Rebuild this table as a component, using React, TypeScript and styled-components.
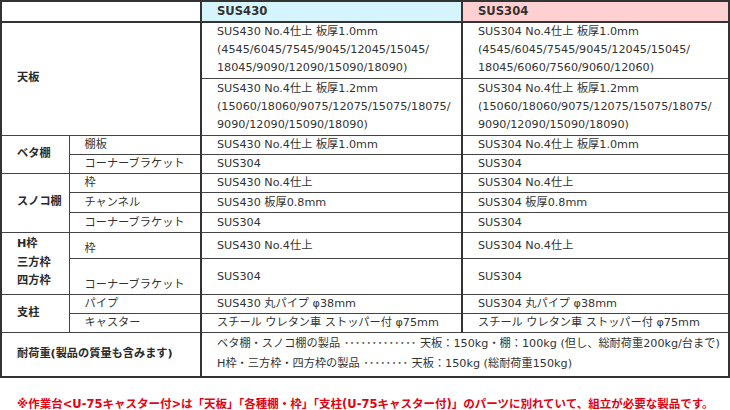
import React from "react";
import styled, { createGlobalStyle } from "styled-components";

const Global = createGlobalStyle`
  html, body { margin: 0; padding: 0; background: #fff; }
  body {
    font-family: "DejaVu Sans", "Noto Sans CJK JP", sans-serif;
    color: #333;
  }
`;

const Page = styled.div`
  width: 730px;
  height: 410px;
  overflow: hidden;
`;

const Table = styled.table`
  border-collapse: collapse;
  table-layout: fixed;
  width: 728px;
  font-size: 11.2px;
  border: 2px solid #333;
`;

const Row = styled.tr<{ $h: number }>`
  height: ${(p) => p.$h}px;
`;

const BaseCell = styled.td`
  border: 1px solid #444;
  padding: 0 4px 0 15px;
  line-height: 15px;
  white-space: nowrap;
  vertical-align: middle;
  overflow: hidden;
`;

const HeadCell = styled(BaseCell).attrs({ as: "th" })<{ $tone?: "blue" | "pink" }>`
  text-align: left;
  font-weight: bold;
  font-size: 11.6px;
  border-bottom: 2px solid #333;
  border-left-width: ${(p) => (p.$tone ? "2px" : "1px")};
  border-left-color: #333;
  background: ${(p) =>
    p.$tone === "blue" ? "#d6f4fb" : p.$tone === "pink" ? "#ffd0d2" : "#fff"};
`;

const LabelCell = styled(BaseCell)`
  font-weight: bold;
  color: #2a2a2a;
  line-height: 18.6px;
`;

const PartCell = styled(BaseCell)<{ $bottom?: boolean }>`
  vertical-align: ${(p) => (p.$bottom ? "bottom" : "middle")};
  padding-bottom: ${(p) => (p.$bottom ? "2px" : "0")};
`;

const SpecCell = styled(BaseCell)<{ $multi?: boolean }>`
  border-left: 2px solid #333;
  line-height: ${(p) => (p.$multi ? "18px" : "15px")};
`;

const LoadCell = styled(SpecCell)`
  line-height: 20px;
`;

const Dots = styled.span`
  color: #555;
`;

const Note = styled.p`
  margin: 19px 0 0 17px;
  font-size: 11.5px;
  font-weight: bold;
  color: #e60012;
  white-space: nowrap;
  line-height: 14px;
`;

const Lines: React.FC<{ lines: string[] }> = ({ lines }) => (
  <>
    {lines.map((l, i) => (
      <React.Fragment key={i}>
        {l}
        {i < lines.length - 1 && <br />}
      </React.Fragment>
    ))}
  </>
);

export default function App() {
  return (
    <Page>
      <Global />
      <Table>
        <colgroup>
          <col style={{ width: 68 }} />
          <col style={{ width: 132 }} />
          <col style={{ width: 261 }} />
          <col style={{ width: 267 }} />
        </colgroup>
        <thead>
          <Row $h={21}>
            <HeadCell colSpan={2} />
            <HeadCell $tone="blue">SUS430</HeadCell>
            <HeadCell $tone="pink">SUS304</HeadCell>
          </Row>
        </thead>
        <tbody>
          <Row $h={56}>
            <LabelCell rowSpan={2} colSpan={2}>天板</LabelCell>
            <SpecCell $multi>
              <Lines
                lines={[
                  "SUS430 No.4仕上 板厚1.0mm",
                  "(4545/6045/7545/9045/12045/15045/",
                  "18045/9090/12090/15090/18090)",
                ]}
              />
            </SpecCell>
            <SpecCell $multi>
              <Lines
                lines={[
                  "SUS304 No.4仕上 板厚1.0mm",
                  "(4545/6045/7545/9045/12045/15045/",
                  "18045/6060/7560/9060/12060)",
                ]}
              />
            </SpecCell>
          </Row>
          <Row $h={57}>
            <SpecCell $multi>
              <Lines
                lines={[
                  "SUS430 No.4仕上 板厚1.2mm",
                  "(15060/18060/9075/12075/15075/18075/",
                  "9090/12090/15090/18090)",
                ]}
              />
            </SpecCell>
            <SpecCell $multi>
              <Lines
                lines={[
                  "SUS304 No.4仕上 板厚1.2mm",
                  "(15060/18060/9075/12075/15075/18075/",
                  "9090/12090/15090/18090)",
                ]}
              />
            </SpecCell>
          </Row>

          <Row $h={19}>
            <LabelCell rowSpan={2}>ベタ棚</LabelCell>
            <PartCell>棚板</PartCell>
            <SpecCell>SUS430 No.4仕上 板厚1.0mm</SpecCell>
            <SpecCell>SUS304 No.4仕上 板厚1.0mm</SpecCell>
          </Row>
          <Row $h={19}>
            <PartCell>コーナーブラケット</PartCell>
            <SpecCell>SUS304</SpecCell>
            <SpecCell>SUS304</SpecCell>
          </Row>

          <Row $h={19}>
            <LabelCell rowSpan={3}>スノコ棚</LabelCell>
            <PartCell>枠</PartCell>
            <SpecCell>SUS430 No.4仕上</SpecCell>
            <SpecCell>SUS304 No.4仕上</SpecCell>
          </Row>
          <Row $h={20}>
            <PartCell>チャンネル</PartCell>
            <SpecCell>SUS430 板厚0.8mm</SpecCell>
            <SpecCell>SUS304 板厚0.8mm</SpecCell>
          </Row>
          <Row $h={20}>
            <PartCell>コーナーブラケット</PartCell>
            <SpecCell>SUS304</SpecCell>
            <SpecCell>SUS304</SpecCell>
          </Row>

          <Row $h={26}>
            <LabelCell rowSpan={2}>
              <Lines lines={["H枠", "三方枠", "四方枠"]} />
            </LabelCell>
            <PartCell $bottom>枠</PartCell>
            <SpecCell>SUS430 No.4仕上</SpecCell>
            <SpecCell>SUS304 No.4仕上</SpecCell>
          </Row>
          <Row $h={36}>
            <PartCell $bottom>コーナーブラケット</PartCell>
            <SpecCell>SUS304</SpecCell>
            <SpecCell>SUS304</SpecCell>
          </Row>

          <Row $h={19}>
            <LabelCell rowSpan={2}>支柱</LabelCell>
            <PartCell>パイプ</PartCell>
            <SpecCell>SUS430 丸パイプ φ38mm</SpecCell>
            <SpecCell>SUS304 丸パイプ φ38mm</SpecCell>
          </Row>
          <Row $h={19}>
            <PartCell>キャスター</PartCell>
            <SpecCell>スチール ウレタン車 ストッパー付 φ75mm</SpecCell>
            <SpecCell>スチール ウレタン車 ストッパー付 φ75mm</SpecCell>
          </Row>

          <Row $h={45}>
            <LabelCell colSpan={2}>耐荷重(製品の質量も含みます)</LabelCell>
            <LoadCell colSpan={2}>
              ベタ棚・スノコ棚の製品 <Dots>･････････････</Dots> 天板：150kg・棚：100kg (但し、総耐荷重200kg/台まで)
              <br />
              H枠・三方枠・四方枠の製品 <Dots>････････</Dots> 天板：150kg (総耐荷重150kg)
            </LoadCell>
          </Row>
        </tbody>
      </Table>
      <Note>
        ※作業台&lt;U-75キャスター付&gt;は「天板」「各種棚・枠」「支柱(U-75キャスター付)」のパーツに別れていて、組立が必要な製品です。
      </Note>
    </Page>
  );
}
